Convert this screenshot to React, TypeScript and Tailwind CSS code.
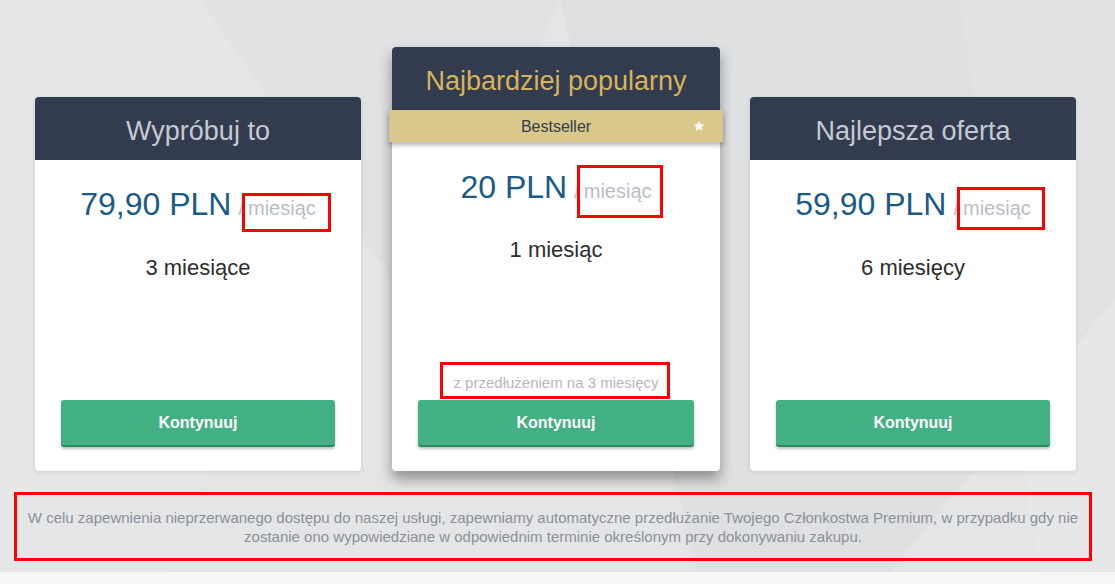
import type { ReactNode } from 'react';

// Red annotation frame laid over a word
function Mark({ className }: { className: string }) {
  return <span className={`pointer-events-none absolute border-[3px] border-[#ff0000] ${className}`} />;
}

function Button() {
  return (
    <button className="mx-[26px] h-[47px] rounded-[3px] border-b-2 border-[#2b8a5d] bg-[#43b083] text-[16px] font-bold text-white shadow-[0_2px_3px_rgba(0,0,0,0.25)]">
      Kontynuuj
    </button>
  );
}

interface PriceProps {
  amount: string;
  mark: string;
}

function Price({ amount, mark }: PriceProps) {
  return (
    <div className="text-center leading-[37px]">
      <span className="text-[32px] text-[#1b5a87]">{amount}</span>
      <span className="ml-[7px] text-[20px] text-[#b9bdc6]">
        /<span className="relative ml-[4px]">
          miesiąc
          <Mark className={mark} />
        </span>
      </span>
    </div>
  );
}

interface SideCardProps {
  title: string;
  amount: string;
  period: string;
  mark: string;
  children?: ReactNode;
}

function SideCard({ title, amount, period, mark }: SideCardProps) {
  return (
    <div className="flex h-[374px] w-[326px] flex-col rounded-[4px] bg-white shadow-[0_1px_4px_rgba(0,0,0,0.12)]">
      <div className="flex h-[63px] items-center justify-center rounded-t-[4px] bg-[#333b4f] pt-[5px] text-[27px] text-[#c3cad4]">
        {title}
      </div>
      <div className="pt-[26px]">
        <Price amount={amount} mark={mark} />
      </div>
      <div className="mt-[27px] text-center text-[22px] leading-[26px] text-[#2d2d2d]">{period}</div>
      <div className="flex-1" />
      <Button />
      <div className="h-[24px]" />
    </div>
  );
}

export default function App() {
  return (
    <div className="relative flex h-[584px] w-full flex-col overflow-hidden bg-[#e3e5e7] font-['Liberation_Sans',Arial,sans-serif]">
      <svg className="absolute inset-0 h-full w-full" viewBox="0 0 1115 584" preserveAspectRatio="none">
        <polygon points="0,0 420,0 160,584 0,584" fill="#ffffff" opacity="0.06" />
        <polygon points="560,0 1115,0 1115,300 880,584 700,584" fill="#000000" opacity="0.02" />
        <polygon points="960,0 1115,0 1115,584 1040,584" fill="#ffffff" opacity="0.08" />
        <polygon points="200,0 560,0 420,320" fill="#000000" opacity="0.015" />
      </svg>

      <div className="relative flex items-end pt-[47px] pl-[35px]">
        <SideCard title="Wypróbuj to" amount="79,90 PLN" period="3 miesiące" mark="left-[-6px] right-[-15px] top-[-4px] bottom-[-13px]" />

        <div className="ml-[31px] flex h-[424px] w-[328px] flex-col rounded-[4px] bg-white shadow-[0_8px_14px_rgba(0,0,0,0.38)]">
          <div className="flex h-[63px] items-center justify-center rounded-t-[4px] bg-[#333b4f] pt-[5px] text-[27px] text-[#d6b35c]">
            Najbardziej popularny
          </div>
          <div className="relative -mx-[3px] flex h-[32px] items-center justify-center bg-[#d9c88a] pt-[1px] text-[16px] text-[#343c50] shadow-[0_3px_5px_rgba(0,0,0,0.3)]">
            Bestseller
            <svg className="absolute right-[18px] top-[10px]" width="12" height="12" viewBox="0 0 24 24">
              <polygon points="12,1.5 15.1,8.3 22.5,9.1 17,14.1 18.5,21.5 12,17.8 5.5,21.5 7,14.1 1.5,9.1 8.9,8.3" fill="#ffffff" />
            </svg>
          </div>
          <div className="pt-[27px]">
            <Price amount="20 PLN" mark="left-[-7px] right-[-11px] top-[-15px] bottom-[-16px]" />
          </div>
          <div className="mt-[26px] text-center text-[22px] leading-[26px] text-[#2d2d2d]">1 miesiąc</div>
          <div className="flex-1" />
          <div className="mb-[8px] text-center text-[15px] leading-[18px] text-[#b4b8bf]">
            <span className="relative">
              z przedłużeniem na 3 miesięcy
              <Mark className="left-[-13px] right-[-11px] top-[-12px] bottom-[-8px]" />
            </span>
          </div>
          <Button />
          <div className="h-[24px]" />
        </div>

        <div className="ml-[30px]">
          <SideCard title="Najlepsza oferta" amount="59,90 PLN" period="6 miesięcy" mark="left-[-6px] right-[-14px] top-[-10px] bottom-[-11px]" />
        </div>
      </div>

      <div className="relative mx-[14px] mt-[21px] flex h-[69px] w-[1078px] items-center justify-center border-[3px] border-[#ff0000] text-center text-[15px] leading-[19px] text-[#8c9099]">
        <p>
          W celu zapewnienia nieprzerwanego dostępu do naszej usługi, zapewniamy automatyczne przedłużanie Twojego Członkostwa Premium, w przypadku gdy nie
          <br />
          zostanie ono wypowiedziane w odpowiednim terminie określonym przy dokonywaniu zakupu.
        </p>
      </div>

      <div className="relative mt-[11px] flex-1 bg-[#f6f8f8]" />
    </div>
  );
}
